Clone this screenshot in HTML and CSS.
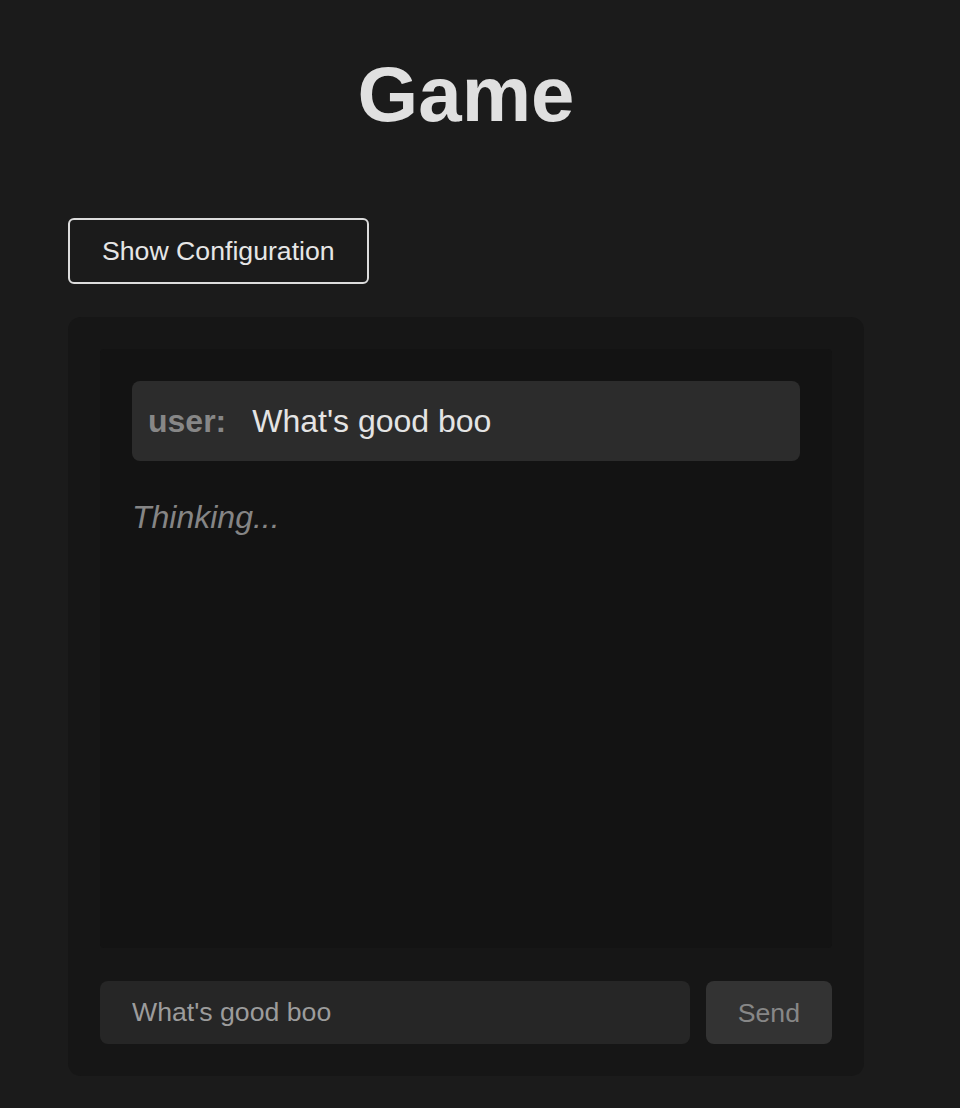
FILE: index.html
```html
<!DOCTYPE html>
<html lang="en">
<head>
<meta charset="utf-8">
<title>Game</title>
<link rel="stylesheet" href="styles.css">
</head>
<body>
<div class="page">
  <h1 class="title">Game</h1>
  <button class="config-btn" type="button">Show Configuration</button>
  <div class="panel">
    <div class="chat">
      <div class="message">
        <span class="role">user:</span>
        <span class="text">What's good boo</span>
      </div>
      <div class="thinking">Thinking...</div>
    </div>
    <div class="composer">
      <input class="composer-input" type="text" value="What's good boo">
      <button class="send-btn" type="button" disabled>Send</button>
    </div>
  </div>
</div>
</body>
</html>
```

FILE: styles.css
```css
html, body {
  margin: 0;
  padding: 0;
  background: #1b1b1b;
}

body {
  font-family: "Liberation Sans", Arial, Helvetica, sans-serif;
  color: #e0e0e0;
}

.page {
  width: 796px;
  margin-left: 68px;
  padding-top: 48px;
  display: flex;
  flex-direction: column;
  align-items: flex-start;
}

.title {
  align-self: stretch;
  margin: 0 0 78px;
  text-align: center;
  font-size: 78px;
  line-height: 92px;
  font-weight: 700;
  color: #e0e0e0;
}

.config-btn {
  font-family: inherit;
  font-size: 26.67px;
  line-height: 30px;
  color: #e6e6e6;
  background: transparent;
  border: 2px solid #dcdcdc;
  border-radius: 6px;
  padding: 16px 32px;
  margin: 0 0 33px;
  cursor: pointer;
}

.panel {
  align-self: stretch;
  background: #161616;
  border-radius: 13px;
  padding: 32px;
  display: flex;
  flex-direction: column;
  gap: 33px;
}

.chat {
  height: 599px;
  box-sizing: border-box;
  background: #131313;
  border-radius: 4px;
  padding: 32px;
  display: flex;
  flex-direction: column;
}

.message {
  background: #2c2c2c;
  border-radius: 8px;
  padding: 0 16px;
  height: 80px;
  display: flex;
  align-items: center;
  font-size: 32px;
}

.role {
  font-weight: 700;
  color: #878787;
  margin-right: 26px;
}

.text {
  color: #e4e4e4;
}

.thinking {
  margin-top: 38px;
  font-size: 32px;
  font-style: italic;
  color: #858585;
}

.composer {
  display: flex;
  gap: 16px;
}

.composer-input {
  flex: 1;
  min-width: 0;
  height: 63px;
  box-sizing: border-box;
  border: none;
  outline: none;
  border-radius: 8px;
  background: #262626;
  color: #9c9c9c;
  font-family: inherit;
  font-size: 26.67px;
  line-height: 30px;
  padding: 0 32px;
}

.send-btn {
  height: 63px;
  box-sizing: border-box;
  border: none;
  border-radius: 8px;
  background: #333333;
  color: #878787;
  font-family: inherit;
  font-size: 26.67px;
  line-height: 30px;
  padding: 0 32px;
}
```
